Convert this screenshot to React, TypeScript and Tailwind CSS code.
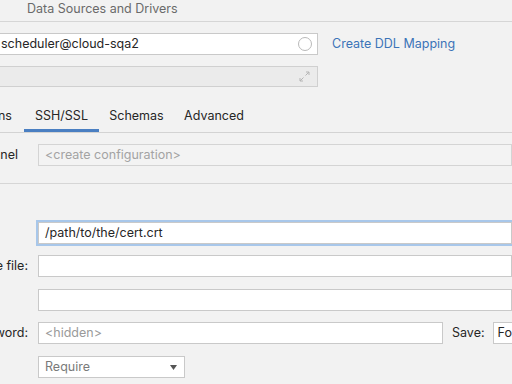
import React from "react";

function Field({
  className = "",
  children,
}: {
  className?: string;
  children?: React.ReactNode;
}) {
  return (
    <div
      className={`h-[22px] bg-white border border-[#c9c9c9] flex items-center px-[6px] whitespace-nowrap overflow-hidden ${className}`}
    >
      {children}
    </div>
  );
}

function Label({ text, width = "w-[28px]" }: { text: string; width?: string }) {
  return (
    <div className={`${width} shrink-0 flex justify-end whitespace-nowrap text-[#262626]`}>
      {text}
    </div>
  );
}

export default function App() {
  const tabs = [
    { name: "Options", w: "w-[70px]" },
    { name: "SSH/SSL", w: "w-[75px]", active: true },
    { name: "Schemas", w: "w-[75px]" },
    { name: "Advanced", w: "w-[80px]" },
  ];

  return (
    <div className="w-[512px] h-[384px] overflow-hidden bg-[#f2f2f2] font-['Inter','Liberation_Sans',sans-serif] text-[12.5px] text-[#262626]">
      {/* header */}
      <div className="h-[22px] border-b border-[#d6d6d6] pl-[27px] pt-[1px] leading-[16px] text-[#6a6a6a]">
        Data Sources and Drivers
      </div>

      {/* name row */}
      <div className="mt-[11px] flex items-center">
        <Field className="w-[328px] -ml-[10px] pl-[10px] justify-between pr-[5px]">
          <span>scheduler@cloud-sqa2</span>
          <span className="w-[14px] h-[14px] rounded-full border border-[#b9b9b9] bg-white" />
        </Field>
        <span className="ml-[14px] text-[#3b74b8]">Create DDL Mapping</span>
      </div>

      {/* comment row */}
      <div className="mt-[11px] flex">
        <div className="w-[328px] -ml-[10px] h-[21px] bg-[#ebebeb] border border-[#d0d0d0] flex items-center justify-end pr-[7px]">
          <svg width="11" height="11" viewBox="0 0 11 11" fill="none" stroke="#b5b5b5" strokeWidth="1">
            <path d="M6.5 4.5L10 1M7 1h3v3" />
            <path d="M4.5 6.5L1 10M1 7v3h3" />
          </svg>
        </div>
      </div>

      {/* tabs */}
      <div className="mt-[13px] h-[33px] border-b border-[#d3d3d3] flex -ml-[46px]">
        {tabs.map((t) => (
          <div key={t.name} className={`${t.w} relative h-[32px] pt-[1px] flex items-center justify-center`}>
            <span>{t.name}</span>
            {t.active && <span className="absolute left-0 right-0 bottom-0 h-[3px] bg-[#4a7fc2]" />}
          </div>
        ))}
      </div>

      {/* ssh tunnel row */}
      <div className="mt-[11px] flex items-center">
        <Label text="SSH tunnel" width="w-[18px]" />
        <div className="ml-[20px] flex-1 h-[22px] bg-[#f3f3f3] border border-[#d4d4d4] flex items-center px-[6px] text-[#a3a3a3] whitespace-nowrap">
          &lt;create configuration&gt;
        </div>
      </div>

      <div className="mt-[17px] border-t border-[#d6d6d6]" />

      {/* cert rows */}
      <div className="mt-[38px] flex items-center">
        <Label text="" />
        <Field className="ml-[10px] flex-1 border-[#7ea9dd] shadow-[0_0_0_2px_#a8c7ea]">
          /path/to/the/cert.crt
        </Field>
      </div>

      <div className="mt-[11px] flex items-center">
        <Label text="Client certificate file:" />
        <Field className="ml-[10px] flex-1" />
      </div>

      <div className="mt-[12px] flex items-center">
        <Label text="" />
        <Field className="ml-[10px] flex-1" />
      </div>

      <div className="mt-[11px] flex items-center">
        <Label text="Password:" />
        <Field className="ml-[10px] w-[405px] shrink-0 text-[#9a9a9a]">&lt;hidden&gt;</Field>
        <span className="ml-[9px] shrink-0">Save:</span>
        <Field className="ml-[8px] w-[80px] shrink-0 pl-[4px]">Forever</Field>
      </div>

      <div className="mt-[12px] flex items-center">
        <Label text="" />
        <Field className="ml-[10px] w-[147px] justify-between pr-[7px] text-[#7a7a7a]">
          <span>Require</span>
          <svg width="7" height="5" viewBox="0 0 7 5">
            <path d="M0 0h7L3.5 5z" fill="#555" />
          </svg>
        </Field>
      </div>
    </div>
  );
}
